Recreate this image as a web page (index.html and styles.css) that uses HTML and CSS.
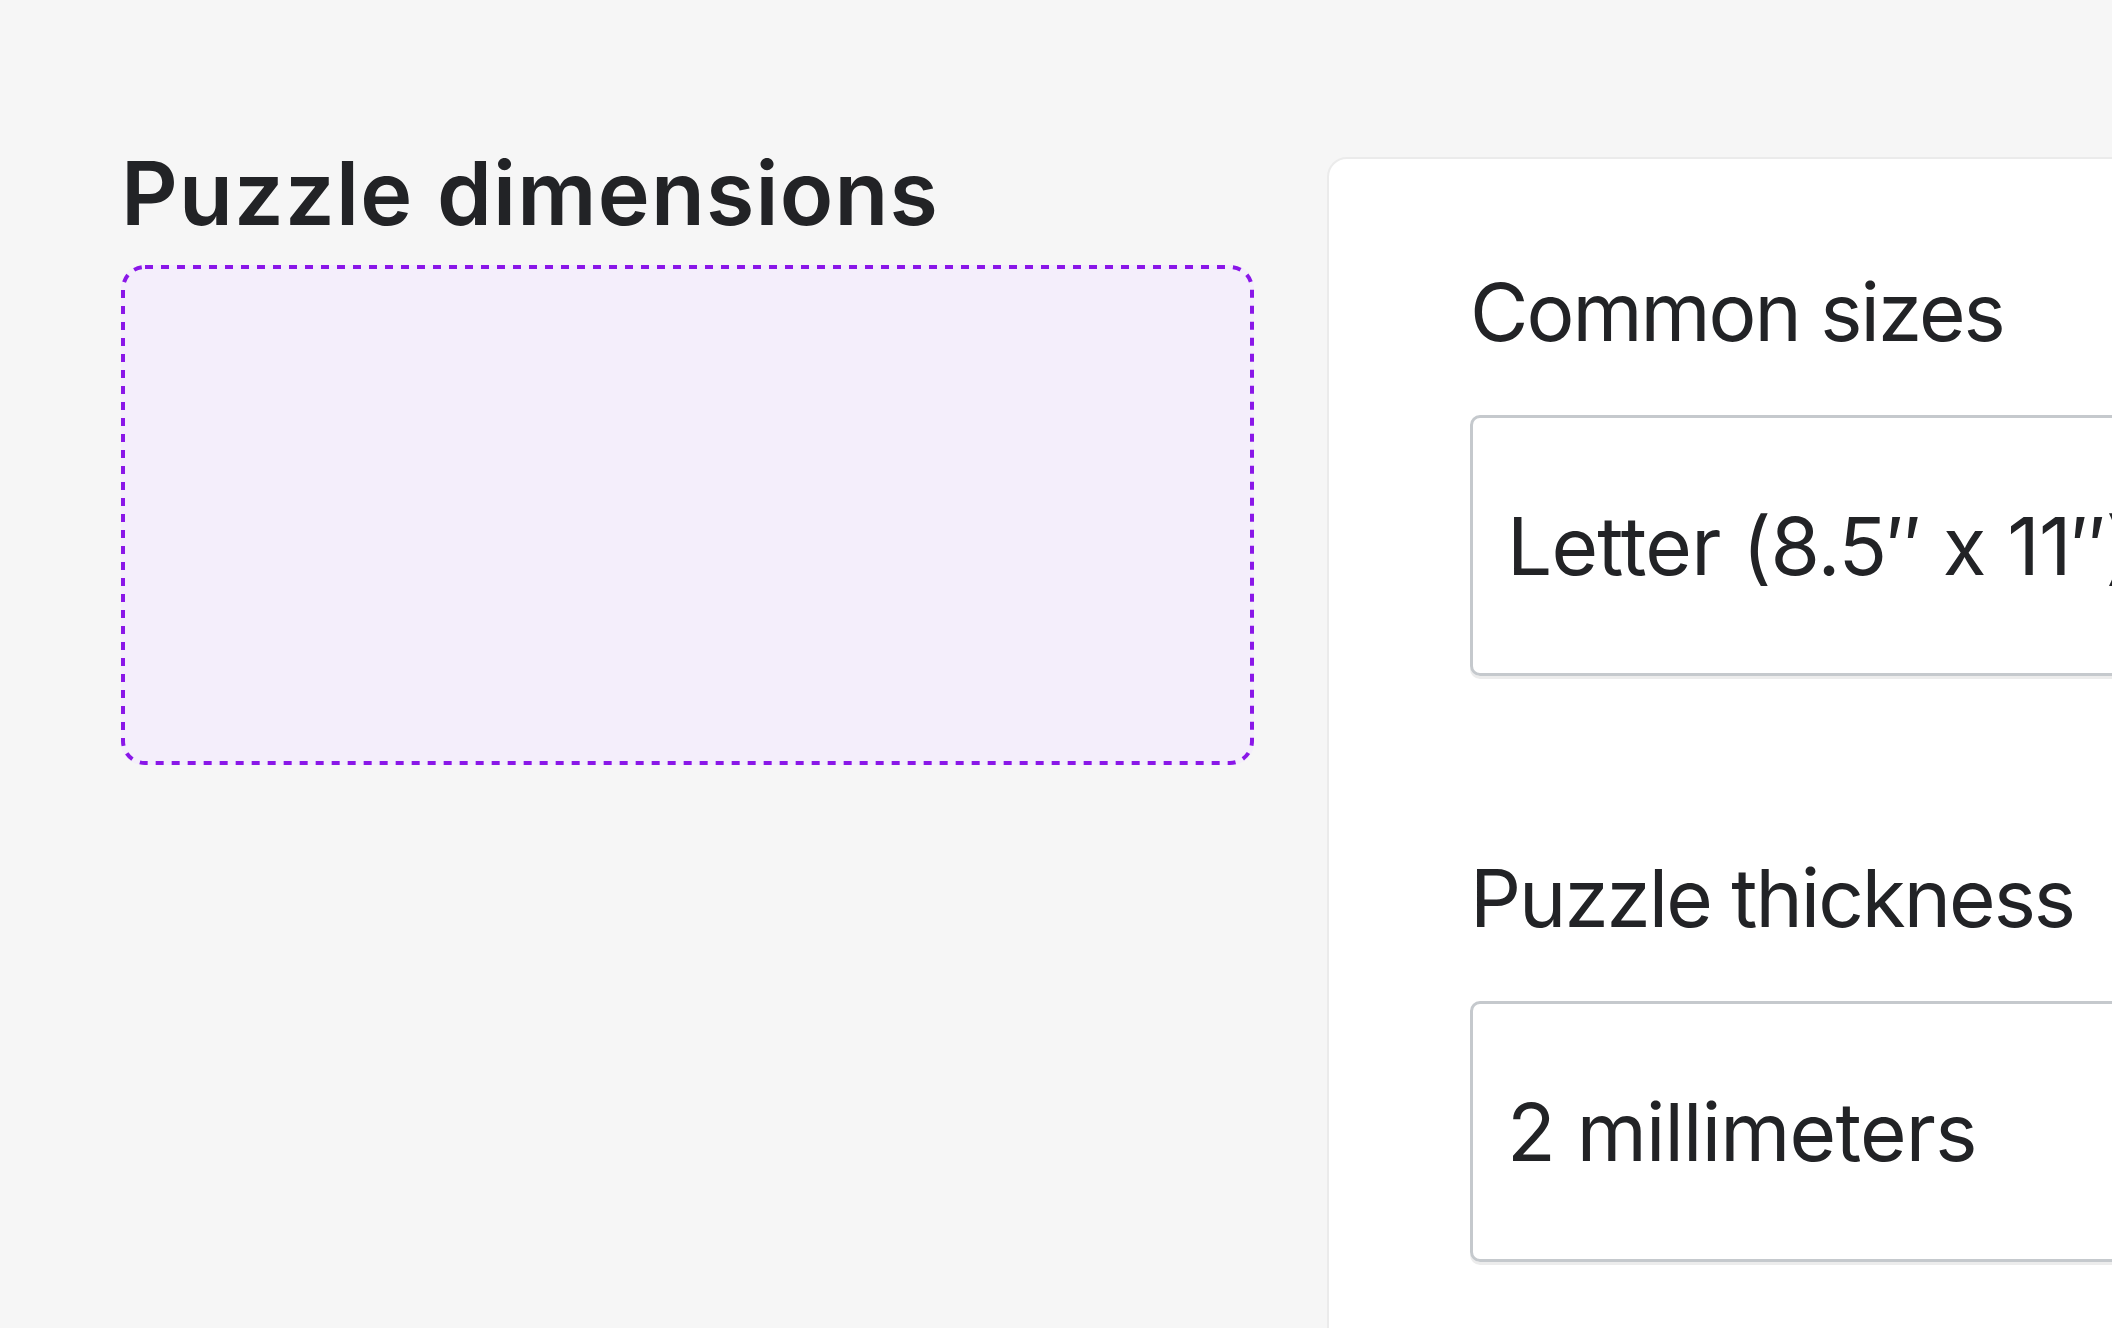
FILE: index.html
```html
<!DOCTYPE html>
<html lang="en">
<head>
<meta charset="utf-8">
<title>Puzzle dimensions</title>
<link rel="stylesheet" href="styles.css">
</head>
<body>
<main class="page">
  <section class="preview">
    <h1 class="preview-title">Puzzle dimensions</h1>
    <div class="dropzone">
      <svg class="dropzone-outline" width="1133" height="500" viewBox="0 0 1133 500" aria-hidden="true">
        <rect x="2" y="2" width="1129" height="496" rx="22" ry="22" fill="none" stroke="#8a17e8" stroke-width="4" stroke-dasharray="8 8"/>
      </svg>
    </div>
  </section>
  <aside class="panel">
    <div class="field">
      <label class="field-label">Common sizes</label>
      <div class="select">Letter (8.5″ x 11″)</div>
    </div>
    <div class="field">
      <label class="field-label">Puzzle thickness</label>
      <div class="select">2 millimeters</div>
    </div>
  </aside>
</main>
</body>
</html>
```

FILE: styles.css
```css
html, body {
  margin: 0;
  padding: 0;
  height: 100%;
  overflow: hidden;
}

body {
  background: #f6f6f6;
  font-family: Inter, "Noto Sans", sans-serif;
  color: #222326;
}

.page {
  display: flex;
  align-items: flex-start;
  padding: 149px 0 0 121px;
}

.preview {
  flex: 0 0 1133px;
  display: flex;
  flex-direction: column;
  gap: 28px;
}

.preview-title {
  margin: 0;
  font-size: 88px;
  line-height: 1;
  font-weight: 600;
  letter-spacing: 1.2px;
  color: #222326;
}

.dropzone {
  position: relative;
  height: 500px;
  border-radius: 22px;
  background: #f4eefb;
}

.dropzone-outline {
  position: absolute;
  top: 0;
  left: 0;
  display: block;
}

.panel {
  flex: 0 0 1000px;
  margin: 8px 0 0 73px;
  height: 1300px;
  box-sizing: border-box;
  background: #ffffff;
  border: 2px solid #ebebeb;
  border-radius: 20px;
  padding: 113px 0 0 141px;
  display: flex;
  flex-direction: column;
  gap: 182px;
}

.field {
  display: flex;
  flex-direction: column;
  gap: 63px;
}

.field-label {
  font-size: 80px;
  line-height: 1;
  font-weight: 400;
  letter-spacing: -2px;
  color: #222326;
}

.select {
  height: 261px;
  box-sizing: border-box;
  border: 3px solid #c5c9cd;
  border-radius: 10px;
  box-shadow: 0 3px 0 #ececec;
  padding-left: 34px;
  display: flex;
  align-items: center;
  font-size: 80px;
  letter-spacing: -0.8px;
  color: #222326;
  white-space: nowrap;
  overflow: hidden;
}
```
